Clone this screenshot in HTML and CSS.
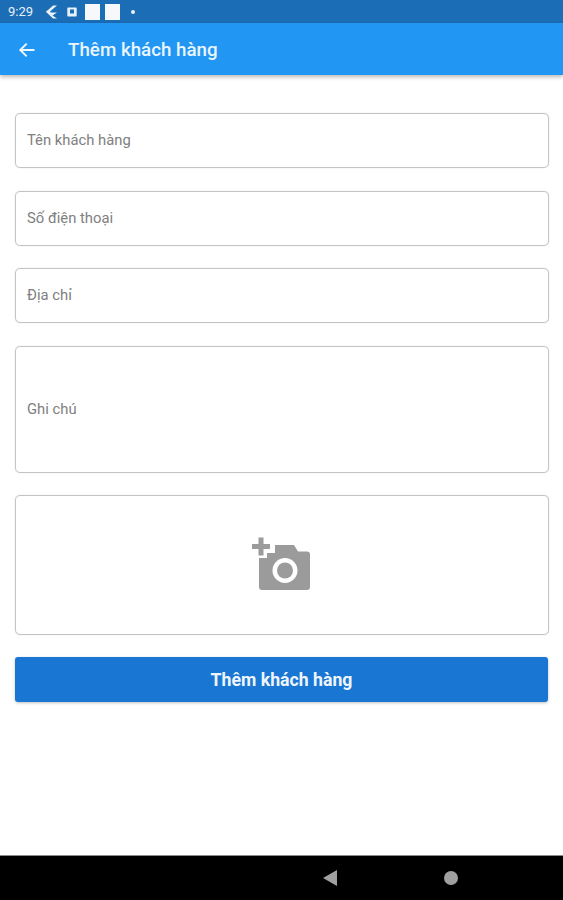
FILE: index.html
```html
<!DOCTYPE html>
<html lang="vi">
<head>
<meta charset="utf-8">
<title>Thêm khách hàng</title>
<link rel="stylesheet" href="styles.css">
</head>
<body>
<div class="screen">
  <div class="status">
    <span class="time">9:29</span>
    <svg class="st-flutter" width="13" height="14" viewBox="0 0 13 14"><path d="M8 0.5 L12 0.5 L4.5 7 L2.5 5.500 Z M0.8 6.800 L2.600 5.200 L6 7.500 L12 7.500 L7.500 10.500 L12 13.500 L8 13.500 Z" fill="#e8f1fa"/></svg>
    <svg class="st-small" width="10" height="10" viewBox="0 0 10 10"><path fill-rule="evenodd" d="M1 0.5h8a.7.7 0 0 1 .7.7v7.600a.7.7 0 0 1-.7.7H1a.7.7 0 0 1-.7-.7V1.200A.7.7 0 0 1 1 .5ZM3 2.500v4h4v-4Z" fill="#e8f1fa"/></svg>
    <span class="st-square"></span>
    <span class="st-square"></span>
    <span class="st-dot"></span>
  </div>
  <header class="appbar">
    <svg class="back" width="18" height="16" viewBox="0 0 18 16"><path d="M16.500 8H2.500M8.700 1.600 2.300 8l6.400 6.400" fill="none" stroke="#eef6fe" stroke-width="2"/></svg>
    <h1 class="title">Thêm khách hàng</h1>
  </header>
  <main class="form">
    <div class="field"><span class="label">Tên khách hàng</span></div>
    <div class="field field-tight"><span class="label">Số điện thoại</span></div>
    <div class="field"><span class="label">Địa chỉ</span></div>
    <div class="field field-note"><span class="label">Ghi chú</span></div>
    <div class="field field-photo">
      <svg width="60" height="54" viewBox="0 0 60 54"><path d="M7.500 0.500h5v6.500h6.500v5h-6.500v6.500h-5v-6.500H1V7h6.500Z" fill="#9b9b9b"/><path fill-rule="evenodd" d="M24 8h19l4 6.500h9a3 3 0 0 1 3 3V50a3 3 0 0 1-3 3H11a3 3 0 0 1-3-3V21h8v-5h8ZM34 21a12.500 12.500 0 1 0 0 25 12.500 12.500 0 0 0 0-25Z" fill="#9b9b9b"/><circle cx="34" cy="33.500" r="8" fill="#9b9b9b"/></svg>
    </div>
    <button class="submit" type="button">Thêm khách hàng</button>
  </main>
  <nav class="navbar">
    <span class="nav-back"></span>
    <span class="nav-home"></span>
  </nav>
</div>
</body>
</html>
```

FILE: styles.css
```css
* { box-sizing: border-box; }
html, body { margin: 0; padding: 0; background: #fff; }
.screen {
  width: 563px;
  height: 900px;
  display: flex;
  flex-direction: column;
  font-family: Roboto, "Liberation Sans", sans-serif;
  overflow: hidden;
}
.status {
  height: 23px;
  background: #1b6db5;
  display: flex;
  align-items: center;
  padding-left: 8px;
  color: #e8f1fa;
}
.time { font-size: 13px; width: 37px; }
.st-flutter { margin-right: 9px; }
.st-small { margin-right: 8px; }
.st-square { width: 15px; height: 16px; background: #f6f8fa; margin-right: 5px; }
.st-dot { width: 4px; height: 4px; border-radius: 50%; background: #e8f1fa; margin-left: 6px; }
.appbar {
  height: 52px;
  background: #2196f3;
  display: flex;
  align-items: center;
  padding-left: 18px;
  padding-top: 1px;
  box-shadow: 0 2px 4px rgba(0,0,0,.28);
  position: relative;
}
.back { margin-right: 32px; }
.title {
  margin: 0;
  font-size: 18.750px;
  font-weight: 500;
  color: #eaf5fe;
}
.form {
  flex: 1;
  padding: 38px 14px 0 15px;
  display: flex;
  flex-direction: column;
}
.field {
  height: 55px;
  margin-bottom: 23px;
  border: 1px solid #c4c4c4;
  border-radius: 5px;
  box-shadow: 0 0 1px rgba(0,0,0,.25);
  display: flex;
  align-items: center;
  padding: 0 0 2px 11px;
}
.field-tight { margin-bottom: 22px; }
.field-note { height: 127px; margin-bottom: 22px; }
.field-photo { height: 140px; margin-bottom: 22px; justify-content: center; padding: 0 2px 3px 0; }
.label { font-size: 14.800px; color: #808080; }
.submit {
  height: 45px;
  margin-right: 1px;
  border: 0;
  border-radius: 3px;
  background: #1976d2;
  color: #eef5fc;
  font: 700 17.700px Roboto, "Liberation Sans", sans-serif;
  box-shadow: 0 1px 3px rgba(0,0,0,.25);
  padding: 0;
}
.navbar {
  height: 45px;
  background: #000;
  border-top: 1px solid #8a8a8a;
  display: flex;
  align-items: center;
  padding-left: 323px;
  gap: 107px;
}
.nav-back {
  width: 0; height: 0;
  border-top: 8px solid transparent;
  border-bottom: 8px solid transparent;
  border-right: 14px solid #a0a0a0;
}
.nav-home { width: 14px; height: 14px; border-radius: 50%; background: #a0a0a0; }
```
